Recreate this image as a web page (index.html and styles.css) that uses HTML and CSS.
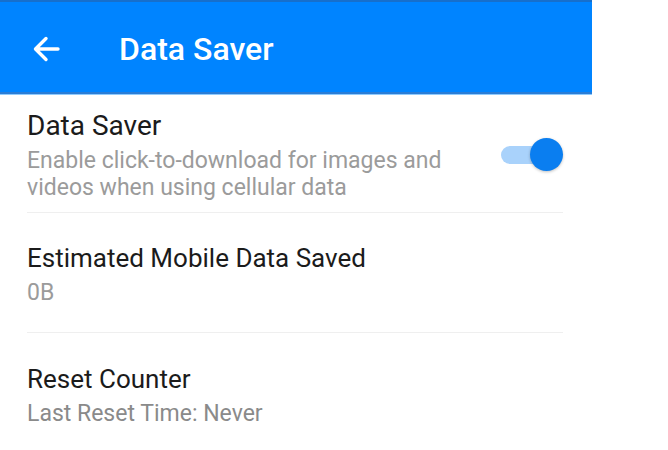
FILE: index.html
```html
<!DOCTYPE html>
<html lang="en">
<head>
  <meta charset="UTF-8">
  <title>Data Saver</title>
  <link rel="stylesheet" href="styles.css">
</head>
<body>

<div class="app">
  <header class="appbar">
    <svg class="back" width="28" height="28" viewBox="0 0 28 28">
      <path d="M26 14H4M14 3.5L3.5 14L14 24.5" fill="none" stroke="#fff" stroke-width="3.4" stroke-linecap="round" stroke-linejoin="round"/>
    </svg>
    <h1>Data Saver</h1>
  </header>

  <div class="list">
    <div class="item first">
      <div class="texts">
        <div class="title">Data Saver</div>
        <div class="sub">Enable click-to-download for images and<br>videos when using cellular data</div>
      </div>
      <div class="toggle">
        <span class="track"></span>
        <span class="knob"></span>
      </div>
    </div>

    <div class="item">
      <div class="texts">
        <div class="title">Estimated Mobile Data Saved</div>
        <div class="sub">0B</div>
      </div>
    </div>

    <div class="item last">
      <div class="texts">
        <div class="title">Reset Counter</div>
        <div class="sub">Last Reset Time: Never</div>
      </div>
    </div>
  </div>
</div>

</body>
</html>
```

FILE: styles.css
```css
body { margin: 0; background: #fff; font-family: Roboto, "Liberation Sans", sans-serif; }
.app { width: 592px; }

.appbar { display: flex; align-items: center; padding-top: 4px; box-sizing: border-box; height: 94px;
  background: #0084ff; border-top: 2px solid #176fcb; border-bottom: 2px solid #2a7dd6; box-shadow: 0 1px 0 #8ecbff; }
.back { margin-left: 32px; }
.appbar h1 { margin: 0 0 0 59px; color: #fff; font-size: 32px; font-weight: 500; }

.list { padding: 0 29px 0 27px; }
.item { display: flex; align-items: center; min-height: 120px; padding-top: 3px; box-sizing: border-box; border-bottom: 1px solid #efefef; }
.item.first { min-height: 119px; padding-top: 4px; }
.item.last { border-bottom: none; }
.texts { flex: 1; }
.title { font-size: 26px; line-height: 32px; color: #1b1b1b; }
.first .title { font-size: 28px; }
.sub { margin-top: 5px; font-size: 23px; line-height: 27px; color: #9b9b9b; }
.last .sub { color: #8a8a8a; }

.toggle { position: relative; width: 62px; height: 34px; }
.track { position: absolute; left: 0; top: 8px; width: 50px; height: 18px; border-radius: 9px; background: #a9d2fb; }
.knob { position: absolute; right: 0; top: 0; width: 33px; height: 33px; border-radius: 50%; background: #0a7ef0;
  box-shadow: 0 1px 3px rgba(0,0,0,0.25); }
```
